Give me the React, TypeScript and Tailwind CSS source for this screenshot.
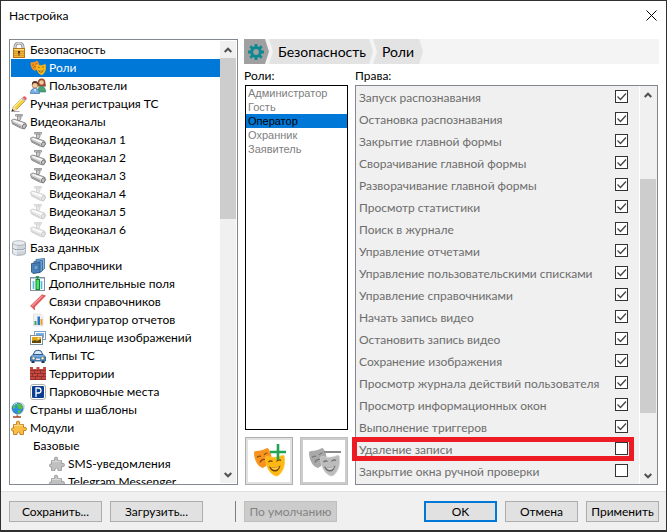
import { useState, type ReactNode } from 'react'
import clsx from 'clsx'

interface IconProps {
  muted?: boolean
}

function Svg({ children, muted }: { children: ReactNode; muted?: boolean }) {
  return (
    <svg viewBox="0 0 16 16" aria-hidden="true" className={clsx('size-4 shrink-0', muted && 'opacity-40')}>
      {children}
    </svg>
  )
}

function LockIcon() {
  return (
    <Svg>
      <path d="M4 7.500V5a4 4 0 0 1 8 0v2.500" fill="none" stroke="#8b8b8b" strokeWidth="3" />
      <path d="M4 7.500V5a4 4 0 0 1 8 0v2.500" fill="none" stroke="#dcdcdc" strokeWidth="1.400" />
      <rect x="2.500" y="6.500" width="11" height="9" fill="#f3b53a" stroke="#b4741a" />
      <path d="M3 7.500h10" stroke="#fbe08b" />
      <path d="M3 9.500h10M3 11.500h10M3 13.500h10" stroke="#d08a1f" strokeWidth=".7" />
      <path d="M7 9h2v2h-.5v2.500h-1V11H7z" fill="#4a2c05" />
    </Svg>
  )
}

function MaskShapes({ gray }: { gray?: boolean }) {
  return (
    <>
      <path
        d="M0 4.500Q0 3 2 3c4 0 7.500-1 10-2.500Q13.500-.5 14.500 1c1.500 2 2.500 4.500 3 8L12 18l-3 2C4 19 0 12 0 4.500z"
        fill={gray ? '#a9a9a9' : '#f7931e'}
      />
      <path d="M3 9.500q2-2 4-1M10 7q1.500-2 3.500-2M6 14.500q1-3.500 5-3" fill="none" stroke={gray ? '#777' : '#8a4b08'} strokeWidth="1.200" />
      <path
        d="M11.500 10Q11.500 8 13.500 8.500c4.500 1.300 10 1 14.500-1Q30 6.500 30.300 8.500c1 7 0 13.500-5.300 18.500-1.500 1.300-3 1.300-5 .3C14 24 11.500 16 11.500 10z"
        fill={gray ? '#bcbcbc' : '#fdb813'}
        stroke={gray ? '#d5d5d5' : '#fdc93c'}
        strokeWidth=".6"
      />
      <path d="M14.500 14q2-2 4-.5M22.500 13.500q2-2.500 4.500-1" fill="none" stroke={gray ? '#666' : '#6b3d06'} strokeWidth="1.200" />
      <path d="M15 18.500q6 2.500 11.500-1-1.500 6-5.500 6-4 0-6-5z" fill={gray ? '#666' : '#6b3d06'} />
      <path d="M16.500 19q4.500 1.500 9-.7-1.500 3.700-4.500 3.700t-4.500-3z" fill={gray ? '#d0d0d0' : '#fdc93c'} />
    </>
  )
}

function MasksIcon() {
  return (
    <svg viewBox="-1 -1 32 31" aria-hidden="true" className="size-4 shrink-0">
      <MaskShapes />
    </svg>
  )
}

function UsersIcon() {
  return (
    <Svg>
      <path d="M7.500 6q0-5.500 4-5.500t4 5l.5 3H8z" fill="#9c4a2d" />
      <circle cx="11.500" cy="4.500" r="2.300" fill="#f4c79e" />
      <path d="M8 14q0-6 3.500-6t4.300 6z" fill="#4ba477" stroke="#2d7a55" strokeWidth=".6" />
      <path d="M.5 15.500q0-5 4.500-5t4.500 5z" fill="#74aee4" stroke="#3b6fab" strokeWidth=".7" />
      <path d="M4 11l1 3 1-3z" fill="#fff" />
      <circle cx="5" cy="7" r="3" fill="#f4c79e" stroke="#75492a" strokeWidth=".5" />
      <path d="M2 7q-.5-4 3-4t3 4q-1-2-3-2T2 7z" fill="#54351f" />
    </Svg>
  )
}

function PencilIcon() {
  return (
    <Svg>
      <path d="M.5 15.500h8" stroke="#aaa" />
      <path d="M1 15l1.500-4.500L11 2l3 3-8.500 8.500z" fill="#f6d13e" stroke="#a37b25" strokeWidth=".7" />
      <path d="M3 11l9-9" stroke="#fdf2a4" strokeWidth="1.200" />
      <path d="M1 15l1.500-4.500 3 3z" fill="#f2d9b0" />
      <path d="M.5 15.500l1-2.500 1.500 1.500z" fill="#222" />
      <path d="M10.500 2.500l1.200-1.200 3 3-1.200 1.200z" fill="#b9bcc4" />
      <path d="M11.500 1.500Q13.500-.5 15 1t-.5 3.500z" fill="#e4646c" />
    </Svg>
  )
}

function CameraIcon({ muted }: IconProps) {
  return (
    <Svg muted={muted}>
      <path d="M4.500.5h7v1.500h-7z" fill="#e4e4e4" stroke="#888" strokeWidth=".8" />
      <path d="M6.500 2h3.500v2L9 6.500H6.500z" fill="#c9c9c9" stroke="#777" strokeWidth=".7" />
      <path d="M.5 6.200L3 5l11.500 4 1 3-2 3-4-1-8-4z" fill="#cdcdcd" stroke="#7b7b7b" strokeWidth=".8" />
      <path d="M1.500 6.700L3 6l9.500 3.300-1 1.700z" fill="#fafafa" />
      <path d="M1.500 8.800l8.500 4.200" stroke="#8a8a8a" />
      <ellipse cx="13.300" cy="12.200" rx="1.700" ry="2.400" fill="#c4c4c4" stroke="#6d6d6d" strokeWidth=".8" transform="rotate(25 13.300 12.200)" />
    </Svg>
  )
}

function DatabaseIcon() {
  return (
    <Svg>
      <path d="M1.500 3v10c0 3 13 3 13 0V3z" fill="#cfd5dd" stroke="#98a0aa" strokeWidth=".8" />
      <path d="M3 4v10M5 5v10" stroke="#f1f4f7" strokeWidth="1.200" />
      <path d="M1.500 8c1 2.500 12 2.500 13 0" fill="none" stroke="#8f98a3" />
      <path d="M1.500 9c1 2.500 12 2.500 13 0" fill="none" stroke="#fff" strokeWidth=".7" />
      <ellipse cx="8" cy="3" rx="6.500" ry="2.300" fill="#e9edf1" stroke="#a4abb4" strokeWidth=".8" />
    </Svg>
  )
}

function BooksIcon() {
  return (
    <Svg>
      <path d="M6 1.500L14.500.5v10L13 12H6z" fill="#8fbbe2" stroke="#35659a" strokeWidth=".8" />
      <path d="M4 3.500l8.500-1v10L11 14H4z" fill="#6fa3d4" stroke="#2f5f93" strokeWidth=".8" />
      <path d="M1.500 5.500l8.500-1v10l-7 1-1.500-1.500z" fill="#4b83bb" stroke="#204a75" strokeWidth=".8" />
      <path d="M4 7.500l4-.5v4.500l-4 .5z" fill="#6fa2d2" stroke="#2f6195" strokeWidth=".7" />
    </Svg>
  )
}

function FieldsIcon() {
  return (
    <Svg>
      <rect x=".5" y="1.500" width="14" height="13" fill="#f7fbff" stroke="#7e8fa0" />
      <path d="M1 2.500h13" stroke="#b9cde0" />
      <path d="M3.500 5v8M11.500 5v8" stroke="#53b7e0" strokeWidth="1.600" />
      <rect x="6" y="3.500" width="3.500" height="10" fill="#4fe06d" stroke="#16852c" />
      <path d="M6 .5h3L7.500 3z" fill="#168a30" stroke="#168a30" strokeWidth=".6" />
    </Svg>
  )
}

function LinkIcon() {
  return (
    <Svg>
      <path d="M.5 12L12 .8l3.500 1L4.500 13v3l-2-2.500z" fill="#e9555b" stroke="#c93d45" strokeWidth=".6" />
      <path d="M2 12L12.500 1.800" stroke="#f59a9d" strokeWidth="1.200" />
    </Svg>
  )
}

function ReportIcon() {
  return (
    <Svg>
      <path d="M3.500 2h7L13 4.500V14H3.500z" fill="#f1f1f1" stroke="#dadada" strokeWidth=".7" />
      <path d="M4.500 9h2v4h-2z" fill="#3ba45c" />
      <path d="M7.500 4.500H10V13H7.500z" fill="#2a74c9" />
      <path d="M10.500 7h2v6h-2z" fill="#f0a11f" />
    </Svg>
  )
}

function ImagesIcon() {
  return (
    <Svg>
      <rect x="4.500" y="1.500" width="11" height="8" fill="#fff" stroke="#7f9cc4" />
      <path d="M6 3h8v5H6z" fill="#72aee8" />
      <rect x=".5" y="5.500" width="12" height="9" fill="#fff" stroke="#8091a5" />
      <path d="M2 7h9v6H2z" fill="#e3a51a" />
      <path d="M2 11l3-1 2 1 4-2v4H2z" fill="#5c4a0d" />
      <circle cx="8.500" cy="8.500" r="1" fill="#fff2a8" />
    </Svg>
  )
}

function CarIcon() {
  return (
    <Svg>
      <path d="M1.500 11h3v4h-3zM11.500 11h3v4h-3z" fill="#243447" />
      <path d="M3 7l2-4q3-1.500 6 0l2 4z" fill="#dbe9f6" stroke="#2e5b8d" />
      <path d="M.5 9L3 6.500h10L15.500 9v4H.5z" fill="#4b8ad0" stroke="#24507e" strokeWidth=".8" />
      <path d="M2 8h12" stroke="#9cc5ee" />
      <circle cx="3.500" cy="10.300" r="1.500" fill="#fbf5c8" stroke="#555" strokeWidth=".5" />
      <circle cx="12.500" cy="10.300" r="1.500" fill="#fbf5c8" stroke="#555" strokeWidth=".5" />
      <path d="M6 10.500h4v1.500H6z" fill="#dfe7ee" />
    </Svg>
  )
}

function WallIcon() {
  return (
    <Svg>
      <path d="M0 4V1h3v2h3.500V1h3v2H13V1h3v13H0z" fill="#c24a41" />
      <path
        d="M0 4.500h16M0 7.500h16M0 10.500h16M0 13.500h16M4.500 4.500v3M10.500 4.500v3M2.500 7.500v3M7.500 7.500v3M13.500 7.500v3M5.500 10.500v3M11.500 10.500v3"
        stroke="#8c2a25"
        strokeWidth=".8"
      />
    </Svg>
  )
}

function ParkingIcon() {
  return (
    <Svg>
      <rect x=".5" y=".5" width="15" height="15" rx="2.500" fill="#fff" stroke="#9a9a9a" strokeWidth=".8" />
      <rect x="2" y="2" width="12" height="12" rx="1" fill="#0b3d91" />
      <path d="M6 13V4h2.500a2.500 2.500 0 0 1 0 5H6" fill="none" stroke="#fff" strokeWidth="1.300" />
    </Svg>
  )
}

function GlobeIcon() {
  return (
    <Svg>
      <path d="M2 15h8" stroke="#a9512b" strokeWidth="1.600" />
      <path d="M5.500 12H7v3H5.500z" fill="#a9512b" />
      <path d="M9.500.5q5 2 3 7T5 13" fill="none" stroke="#cfd6dd" strokeWidth="1.500" />
      <circle cx="6.500" cy="6.300" r="5.500" fill="#2d8fe0" stroke="#1b5fa5" strokeWidth=".6" />
      <path d="M6 1.500l4 .5 2 3.500-2 2-2.500-1L6 4zM7 8l3 1-1.500 2.500H7zM2 3l2 .5.5 2L2 7z" fill="#53c341" />
      <path d="M3 3q1.500-1.500 3-1.500" stroke="#c9e9ff" fill="none" />
    </Svg>
  )
}

function PuzzleIcon({ muted }: IconProps) {
  return (
    <Svg>
      <path
        d="M2.500 4.500h3.200Q4.500 1 7 1t1.500 3.500h4v3Q15.500 6.500 15.500 9t-3 1.500v4H9q.5-2.500-1.500-2.500T6 14.500H2.500V11Q.5 11.500.5 9.500T2.500 8z"
        fill={muted ? '#c0c0c0' : '#f9bf45'}
        stroke={muted ? '#9c9c9c' : '#c07a20'}
        strokeWidth=".9"
      />
      <path d="M3.500 6V5.300h8" fill="none" stroke={muted ? '#dedede' : '#fde59b'} />
    </Svg>
  )
}

function GearIcon() {
  return (
    <svg viewBox="0 0 16 16" aria-hidden="true" className="size-4">
      <circle cx="8" cy="8" r="4.400" fill="none" stroke="#0d8a91" strokeWidth="3" />
      <path
        d="M8 0v3M8 13v3M0 8h3M13 8h3M2.300 2.300l2.200 2.200M11.500 11.500l2.200 2.200M13.700 2.300l-2.200 2.200M4.500 11.500l-2.200 2.200"
        stroke="#0d8a91"
        strokeWidth="2.800"
      />
    </svg>
  )
}

interface TreeItem {
  label: string
  level: number
  icon?: (props: IconProps) => ReactNode
  muted?: boolean
}

const TREE: TreeItem[] = [
  { level: 0, label: 'Безопасность', icon: LockIcon },
  { level: 1, label: 'Роли', icon: MasksIcon },
  { level: 1, label: 'Пользователи', icon: UsersIcon },
  { level: 0, label: 'Ручная регистрация ТС', icon: PencilIcon },
  { level: 0, label: 'Видеоканалы', icon: CameraIcon },
  { level: 1, label: 'Видеоканал 1', icon: CameraIcon },
  { level: 1, label: 'Видеоканал 2', icon: CameraIcon },
  { level: 1, label: 'Видеоканал 3', icon: CameraIcon },
  { level: 1, label: 'Видеоканал 4', icon: CameraIcon, muted: true },
  { level: 1, label: 'Видеоканал 5', icon: CameraIcon, muted: true },
  { level: 1, label: 'Видеоканал 6', icon: CameraIcon, muted: true },
  { level: 0, label: 'База данных', icon: DatabaseIcon },
  { level: 1, label: 'Справочники', icon: BooksIcon },
  { level: 1, label: 'Дополнительные поля', icon: FieldsIcon },
  { level: 1, label: 'Связи справочников', icon: LinkIcon },
  { level: 1, label: 'Конфигуратор отчетов', icon: ReportIcon },
  { level: 1, label: 'Хранилище изображений', icon: ImagesIcon },
  { level: 1, label: 'Типы ТС', icon: CarIcon },
  { level: 1, label: 'Территории', icon: WallIcon },
  { level: 1, label: 'Парковочные места', icon: ParkingIcon },
  { level: 0, label: 'Страны и шаблоны', icon: GlobeIcon },
  { level: 0, label: 'Модули', icon: PuzzleIcon },
  { level: 1, label: 'Базовые' },
  { level: 2, label: 'SMS-уведомления', icon: PuzzleIcon, muted: true },
  { level: 2, label: 'Telegram Messenger', icon: PuzzleIcon, muted: true },
]

const INDENT = ['pl-0', 'pl-[19px]', 'pl-[38px]']

const ROLES = ['Администратор', 'Гость', 'Оператор', 'Охранник', 'Заявитель']

const RIGHTS = [
  { label: 'Запуск распознавания', on: true },
  { label: 'Остановка распознавания', on: true },
  { label: 'Закрытие главной формы', on: true },
  { label: 'Сворачивание главной формы', on: true },
  { label: 'Разворачивание главной формы', on: true },
  { label: 'Просмотр статистики', on: true },
  { label: 'Поиск в журнале', on: true },
  { label: 'Управление отчетами', on: true },
  { label: 'Управление пользовательскими списками', on: true },
  { label: 'Управление справочниками', on: true },
  { label: 'Начать запись видео', on: true },
  { label: 'Остановить запись видео', on: true },
  { label: 'Сохранение изображения', on: true },
  { label: 'Просмотр журнала действий пользователя', on: true },
  { label: 'Просмотр информационных окон', on: true },
  { label: 'Выполнение триггеров', on: true },
  { label: 'Удаление записи', on: false, marked: true },
  { label: 'Закрытие окна ручной проверки', on: false },
]

function Scrollbar({ before, thumb, after }: { before: string; thumb: string; after: string }) {
  return (
    <div className="flex w-4 shrink-0 flex-col bg-[#f0f0f0]">
      <button type="button" aria-label="Вверх" className="flex h-[17px] shrink-0 items-center justify-center">
        <svg viewBox="0 0 8 6" className="h-[6px] w-2" aria-hidden="true">
          <path d="M.7 5L4 1.700 7.300 5" fill="none" stroke="#505050" strokeWidth="2" />
        </svg>
      </button>
      <div className={before} />
      <div className={clsx('bg-[#cdcdcd]', thumb)} />
      <div className={after} />
      <button type="button" aria-label="Вниз" className="flex h-[17px] shrink-0 items-center justify-center">
        <svg viewBox="0 0 8 6" className="h-[6px] w-2" aria-hidden="true">
          <path d="M.7 1L4 4.300 7.300 1" fill="none" stroke="#505050" strokeWidth="2" />
        </svg>
      </button>
    </div>
  )
}

function Tree() {
  const [selected, setSelected] = useState('Роли')

  return (
    <nav className="flex w-[229px] shrink-0 overflow-hidden border border-[#828790] p-px">
      <ul className="min-w-0 flex-1">
        {TREE.map(({ label, level, icon: Icon, muted }) => (
          <li key={label}>
            <button
              type="button"
              onClick={() => setSelected(label)}
              className={clsx(
                'flex h-[18px] w-full items-center gap-[3px] whitespace-nowrap text-left',
                INDENT[level],
                selected === label && 'bg-[#0078d7] text-white',
              )}
            >
              {Icon && <Icon muted={muted} />}
              <span className={clsx(!Icon && 'pl-[3px]')}>{label}</span>
            </button>
          </li>
        ))}
      </ul>
      <Scrollbar before="h-0" thumb="grow-[162]" after="grow-[248]" />
    </nav>
  )
}

function Breadcrumbs() {
  return (
    <div className="flex h-[25px] items-stretch bg-[#f4f4f4] text-sm">
      <button
        type="button"
        aria-label="Настройка"
        className="flex w-[25px] items-center bg-[#a0a0a0] pl-1 [clip-path:polygon(0_0,21px_0,100%_50%,21px_100%,0_100%)]"
      >
        <GearIcon />
      </button>
      <button
        type="button"
        className="bg-[#e3e3e3] pr-[7px] pl-[9px] [clip-path:polygon(0_0,calc(100%-4px)_0,100%_50%,calc(100%-4px)_100%,0_100%,4px_50%)]"
      >
        Безопасность
      </button>
      <button
        type="button"
        className="bg-[#e3e3e3] pr-[9px] pl-[9px] [clip-path:polygon(0_0,calc(100%-4px)_0,100%_50%,calc(100%-4px)_100%,0_100%,4px_50%)]"
      >
        Роли
      </button>
    </div>
  )
}

function Roles() {
  const [selected, setSelected] = useState('Оператор')

  return (
    <section className="flex w-[104px] shrink-0 flex-col">
      <h2 className="h-[21px] leading-6">Роли:</h2>
      <ul className="ml-px flex-1 border border-black font-['Liberation_Sans',sans-serif] text-[11px] leading-[14px] text-[#808080]">
        {ROLES.map(role => (
          <li key={role}>
            <button
              type="button"
              onClick={() => setSelected(role)}
              className={clsx('block w-full pl-0.5 text-left', selected === role && 'bg-[#0078d7] text-black')}
            >
              {role}
            </button>
          </li>
        ))}
      </ul>
      <div className="mt-[7px] ml-px flex justify-between">
        <button
          type="button"
          aria-label="Добавить роль"
          className="flex size-12 items-center justify-center border border-[#adadad] bg-white ring-2 ring-[#e1e1e1] ring-inset"
        >
          <svg viewBox="-2 -4 35 34" className="h-[34px] w-[35px]" aria-hidden="true">
            <MaskShapes />
            <path d="M24 -4v16M16 4h16" stroke="#22a455" strokeWidth="2.600" />
          </svg>
        </button>
        <button
          type="button"
          aria-label="Удалить роль"
          disabled
          className="flex size-12 items-center justify-center border border-[#bfbfbf] bg-white ring-2 ring-[#cccccc] ring-inset"
        >
          <svg viewBox="-2 -4 35 34" className="h-[34px] w-[35px]" aria-hidden="true">
            <MaskShapes gray />
            <path d="M15 4h17" stroke="#8a8a8a" strokeWidth="2" />
          </svg>
        </button>
      </div>
    </section>
  )
}

function Rights() {
  return (
    <section className="flex min-w-0 flex-1 flex-col">
      <h2 className="h-[21px] leading-6">Права:</h2>
      <div className="flex min-h-0 flex-1 border border-[#828790] bg-[#f0f0f0] pr-px">
        <ul className="min-w-0 flex-1 pt-px text-[#6d6d6d]">
          {RIGHTS.map(({ label, on, marked }) => (
            <li key={label} className="relative">
              <label className="flex h-[22px] items-start justify-between pr-[11px] pl-[3px] leading-[22px] whitespace-nowrap">
                {label}
                <span className="mt-[3px] grid shrink-0">
                  <input
                    type="checkbox"
                    defaultChecked={on}
                    className="peer col-start-1 row-start-1 size-[13px] appearance-none border border-[#333] bg-white"
                  />
                  <svg
                    viewBox="0 0 13 13"
                    aria-hidden="true"
                    className="pointer-events-none invisible col-start-1 row-start-1 size-[13px] peer-checked:visible"
                  >
                    <path d="M2.500 6.500l3 3 5.500-6" fill="none" stroke="#444" strokeWidth="1.300" />
                  </svg>
                </span>
              </label>
              {marked && (
                <div className="pointer-events-none absolute -top-0.5 right-[5px] bottom-0 -left-1 border-5 border-[#ed1c24]" />
              )}
            </li>
          ))}
        </ul>
        <div className="w-px bg-white" />
        <Scrollbar before="grow-[76]" thumb="grow-[235]" after="grow-[54]" />
      </div>
    </section>
  )
}

function DialogButton({ children, className, disabled }: { children: ReactNode; className: string; disabled?: boolean }) {
  return (
    <button
      type="button"
      disabled={disabled}
      className={clsx('h-[21px] shrink-0 leading-[17px] whitespace-nowrap', className)}
    >
      {children}
    </button>
  )
}

export default function App() {
  return (
    <div className="h-screen overflow-hidden bg-[#303030] p-px pb-0.5 font-['Lato','Noto_Sans',sans-serif] text-[12px] text-black">
      <div className="flex h-full flex-col bg-white">
        <header className="flex h-[38px] shrink-0 items-start justify-between pr-[9px] pl-2">
          <h1 className="leading-[30px]">Настройка</h1>
          <button type="button" aria-label="Закрыть" className="mt-[9px]">
            <svg viewBox="0 0 11 11" className="size-[11px]" aria-hidden="true">
              <path d="M.5.5l10 10M10.500.5l-10 10" stroke="#000" />
            </svg>
          </button>
        </header>

        <main className="flex min-h-0 flex-1 gap-1.5 pr-[7px] pb-1.5 pl-2">
          <Tree />
          <div className="flex min-w-0 flex-1 flex-col">
            <Breadcrumbs />
            <div className="flex min-h-0 flex-1 gap-[7px] pr-px">
              <Roles />
              <Rights />
            </div>
          </div>
        </main>

        <footer className="flex h-[39px] shrink-0 items-center gap-2 border-t border-[#dfdfdf] bg-[#f0f0f0] pr-[7px] pl-2">
          <DialogButton className="w-[93px] border border-[#adadad] bg-[#e1e1e1]">Сохранить...</DialogButton>
          <DialogButton className="w-[93px] border border-[#adadad] bg-[#e1e1e1]">Загрузить...</DialogButton>
          <div className="ml-6 h-[21px] w-px bg-[#808080]" />
          <DialogButton disabled className="w-[93px] border border-[#bfbfbf] bg-[#cccccc] text-[#838383]">
            По умолчанию
          </DialogButton>
          <div className="flex flex-1 justify-end gap-2">
            <DialogButton className="w-[73px] border-2 border-[#0078d7] bg-[#e1e1e1]">OK</DialogButton>
            <DialogButton className="w-[73px] border border-[#adadad] bg-[#e1e1e1]">Отмена</DialogButton>
            <DialogButton className="w-[73px] border border-[#adadad] bg-[#e1e1e1]">Применить</DialogButton>
          </div>
        </footer>
      </div>
    </div>
  )
}
